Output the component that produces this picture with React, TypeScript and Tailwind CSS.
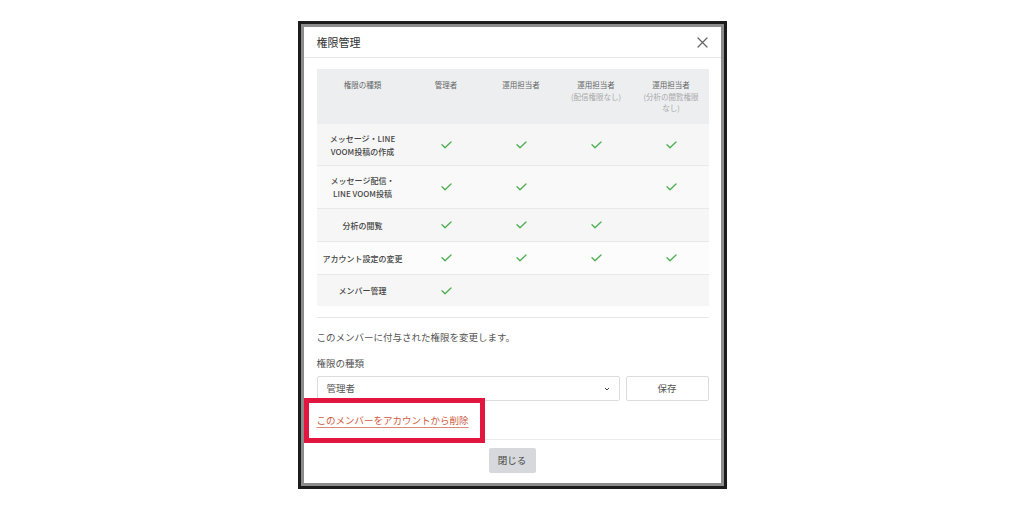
import React from "react";

const Check = () => (
  <svg width="11" height="8" viewBox="0 0 11 8" fill="none">
    <path d="M1 3.8 L4 6.8 L10 1" stroke="#4caf50" strokeWidth="1.3" strokeLinecap="round" strokeLinejoin="round" />
  </svg>
);

type Row = { label: React.ReactNode; checks: boolean[]; h: string; bg: string };

const rows: Row[] = [
  { label: <>メッセージ・LINE<br />VOOM投稿の作成</>, checks: [true, true, true, true], h: "h-[42px]", bg: "bg-[#f6f6f6]" },
  { label: <>メッセージ配信・<br />LINE VOOM投稿</>, checks: [true, true, false, true], h: "h-[43px]", bg: "bg-[#f9f9f9]" },
  { label: <>分析の閲覧</>, checks: [true, true, true, false], h: "h-[33px]", bg: "bg-[#f6f6f6]" },
  { label: <>アカウント設定の変更</>, checks: [true, true, true, true], h: "h-[33px]", bg: "bg-[#fcfcfc]" },
  { label: <>メンバー管理</>, checks: [true, false, false, false], h: "h-[31px]", bg: "bg-[#f6f6f6]" },
];

export default function App() {
  return (
    <div
      className="w-[1024px] h-[511px] bg-white flex justify-center items-start pt-[21px]"
      style={{ fontFamily: '"Noto Sans CJK JP", "Noto Sans", sans-serif' }}
    >
      <div className="relative w-[429px] h-[468px] border-[3px] border-[#1c1c1c] bg-[#8c8c8c] p-[3px]">
        <div className="w-full h-full bg-white flex flex-col">
          {/* header */}
          <div className="h-[31px] shrink-0 border-b border-[#e6e6e6] flex items-center justify-between pl-[13px] pr-[13px]">
            <span className="text-[11px] text-[#333] leading-none">権限管理</span>
            <svg width="11" height="11" viewBox="0 0 11 11">
              <path d="M1 1 L10 10 M10 1 L1 10" stroke="#666" strokeWidth="1.3" strokeLinecap="round" />
            </svg>
          </div>
          {/* content */}
          <div className="px-[13px] pr-[12px] pt-[11px] flex flex-col">
            <div className="w-[392px]">
              <div className="grid grid-cols-[92px_75px_75px_75px_75px] h-[55px] bg-[#eceef0] text-[7.5px] leading-[11.5px] text-[#666] text-center pt-[10px]">
                <div>権限の種類</div>
                <div>管理者</div>
                <div>運用担当者</div>
                <div>
                  運用担当者
                  <br />
                  <span className="text-[#aaa]">(配信権限なし)</span>
                </div>
                <div>
                  運用担当者
                  <br />
                  <span className="text-[#aaa]">
                    (分析の閲覧権限
                    <br />
                    なし)
                  </span>
                </div>
              </div>
              {rows.map((r, i) => (
                <div
                  key={i}
                  className={`grid grid-cols-[92px_75px_75px_75px_75px] items-center ${r.h} ${r.bg} ${i < rows.length - 1 ? "border-b border-[#e9e9e9]" : ""}`}
                >
                  <div className="text-[8px] leading-[13px] text-[#444] font-medium text-center">{r.label}</div>
                  {r.checks.map((c, j) => (
                    <div key={j} className="flex justify-center">
                      {c ? <Check /> : null}
                    </div>
                  ))}
                </div>
              ))}
            </div>
            <div className="mt-[11px] border-t border-[#e6e6e6]" />
            <div className="mt-[13px] text-[9.5px] leading-[12px] text-[#555]">
              このメンバーに付与された権限を変更します。
            </div>
            <div className="mt-[14px] text-[9.5px] leading-[12px] text-[#555]">権限の種類</div>
            <div className="mt-[7px] flex gap-[6px] h-[25px]">
              <div className="w-[303px] border border-[#dcdcdc] rounded-[2px] flex items-center justify-between pl-[9px] pr-[9px] text-[9.5px] text-[#555]">
                <span>管理者</span>
                <svg width="6" height="4" viewBox="0 0 6 4">
                  <path d="M1 1 L3 3 L5 1" stroke="#444" strokeWidth="1" fill="none" />
                </svg>
              </div>
              <div className="w-[83px] border border-[#dcdcdc] rounded-[2px] flex items-center justify-center text-[9.5px] text-[#555]">
                保存
              </div>
            </div>
            <div className="mt-[12px] h-[14px] flex items-center">
              <span className="text-[9.5px] leading-[12px] text-[#cf5a3e] underline decoration-[#d98a75] underline-offset-[3px]">
                このメンバーをアカウントから削除
              </span>
            </div>
          </div>
          <div className="mt-[12px] border-t border-[#ececec] flex justify-center pt-[8px]">
            <div className="w-[47px] h-[25px] bg-[#d6d8dc] rounded-[2px] flex items-center justify-center text-[9.5px] text-[#444]">
              閉じる
            </div>
          </div>
        </div>
        {/* red annotation box */}
        <div className="absolute left-[3px] top-[374px] w-[181px] h-[45px] border-[5px] border-[#e3163f]" />
      </div>
    </div>
  );
}
